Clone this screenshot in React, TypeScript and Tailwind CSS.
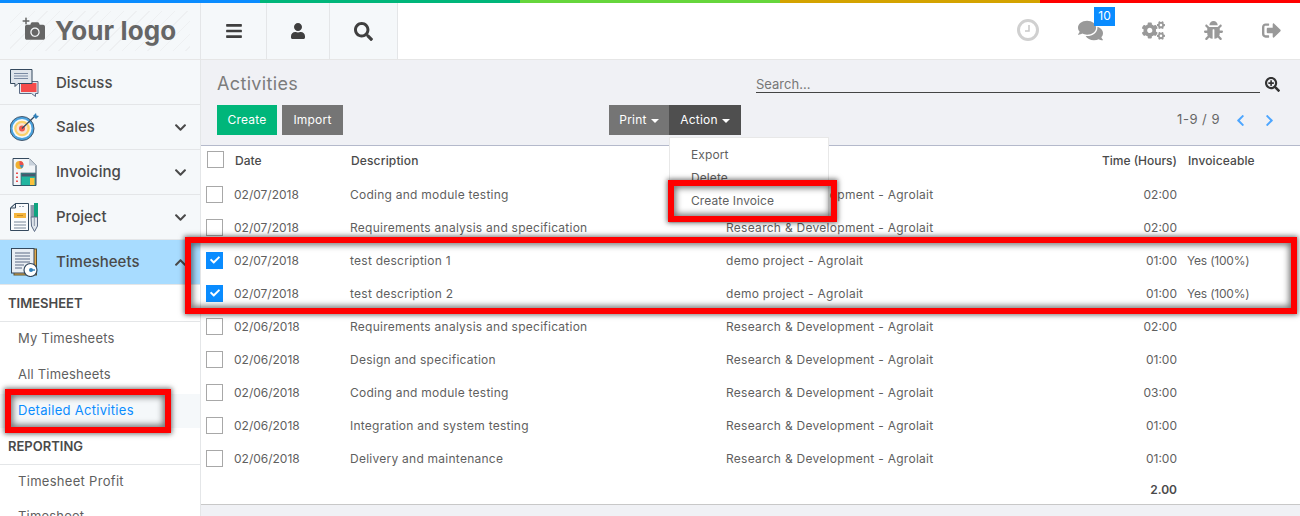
import React from 'react';
import { FaBars, FaUser, FaSearch, FaComments, FaCogs, FaBug, FaSignOutAlt, FaSearchPlus, FaChevronDown, FaChevronUp, FaChevronLeft, FaChevronRight, FaCheck, FaCamera, FaPlus } from 'react-icons/fa';

const DiscussIcon = () => (
  <svg width="30" height="30" viewBox="0 0 30 30">
    <path d="M9.500 13.500h18.500v12h-2.500v3l-4-3H9.500z" fill="#dfe5ec" stroke="#5c6b85" strokeWidth="1" />
    <rect x="11" y="15" width="15.500" height="9" fill="#f54a4a" />
    <path d="M.5 1.500h21.500v14H8l-3 3v-3H.5z" fill="#dfe5ec" stroke="#34495e" strokeWidth="1" />
    <path d="M4 5.500h14M4 8h14M4 10.500h14" stroke="#7a8aa3" strokeWidth="1.200" />
  </svg>
);

const SalesIcon = () => (
  <svg width="30" height="30" viewBox="0 0 30 30">
    <circle cx="12" cy="16.500" r="12" fill="#4aa3df" stroke="#46596e" strokeWidth="1" />
    <circle cx="12" cy="16.500" r="9.500" fill="#f5f8fa" />
    <circle cx="12" cy="16.500" r="7.800" fill="#fbd16b" />
    <circle cx="12" cy="16.500" r="5.500" fill="#fbe3cf" />
    <circle cx="12" cy="16.500" r="3" fill="#ef5a50" />
    <path d="M12 16.500L24 5" stroke="#34495e" strokeWidth="1.200" />
    <path d="M23 4l3-3 .5 2.500L29 4l-3 3z" fill="#2f7fb8" />
  </svg>
);

const InvoicingIcon = () => (
  <svg width="30" height="30" viewBox="0 0 30 30">
    <path d="M3 1.500h16l7 7v20H3z" fill="#f2f5f8" stroke="#34495e" strokeWidth="1" />
    <path d="M19 1.500v7h7z" fill="#c9d2dc" />
    <circle cx="9.500" cy="8" r="4" fill="#f0b030" />
    <path d="M9.500 8V4a4 4 0 0 1 4 4z" fill="#e94f4f" />
    <path d="M9.500 8h4a4 4 0 0 1-2 3.500z" fill="#3f8fc4" />
    <rect x="11" y="16" width="14.500" height="12.500" fill="#22b5a0" stroke="#34495e" strokeWidth=".6" />
    <rect x="11.500" y="16.500" width="13.500" height="3" fill="#46596e" />
    <rect x="20" y="21" width="4.500" height="7" fill="#fbc13c" />
    <path d="M7 15.500v1.500M7 19.500v1.500M7 23.500v1.500" stroke="#e94f4f" strokeWidth="2" />
  </svg>
);

const ProjectIcon = () => (
  <svg width="30" height="30" viewBox="0 0 30 30">
    <path d="M.5 6l5-4.500h13v27H.5z" fill="#fbfcfd" stroke="#34495e" strokeWidth="1" />
    <path d="M.5 6h5V1.500z" fill="#dfe5ec" stroke="#34495e" strokeWidth="1" />
    <path d="M9 4.500h2M12 4.500h2" stroke="#9aa6b5" strokeWidth="1" />
    <rect x="4" y="11" width="12" height="5" fill="#f5b53d" />
    <path d="M7 13.500h6" stroke="#c78a1f" strokeWidth="1" />
    <path d="M4 20h12M4 23h12M4 26h12" stroke="#a4adb9" strokeWidth="1.500" />
    <rect x="24" y="1" width="4" height="14" fill="#0fa37f" />
    <rect x="20.500" y="3" width="3.500" height="12" fill="#8a96a8" />
    <path d="M21 15h6.500v9l-3 5.500-3-5.500z" fill="#dfe5ec" stroke="#5c6b85" strokeWidth="1" />
    <path d="M24.300 15v9" stroke="#8a96a8" strokeWidth="1" />
  </svg>
);

const TimesheetsIcon = () => (
  <svg width="30" height="30" viewBox="0 0 30 30">
    <rect x="4" y="2" width="22.500" height="26" fill="#e3a94a" stroke="#5a5230" strokeWidth="1" />
    <rect x="1.500" y="1.500" width="22.500" height="24.500" fill="#e9eef3" stroke="#34495e" strokeWidth="1" />
    <path d="M5 6h15M5 9h15M5 12h15M5 15h15M5 18h9M5 21h7" stroke="#5c6b85" strokeWidth="1.200" />
    <circle cx="20.500" cy="23" r="6.500" fill="#fff" stroke="#34495e" strokeWidth="1.200" />
    <circle cx="21" cy="23" r="2" fill="#2f7fb8" />
    <path d="M21 23h4" stroke="#2f7fb8" strokeWidth="1.400" />
  </svg>
);

const menu = [
  { label: 'Discuss', icon: <DiscussIcon />, first: true },
  { label: 'Sales', icon: <SalesIcon />, arrow: 'down' },
  { label: 'Invoicing', icon: <InvoicingIcon />, arrow: 'down' },
  { label: 'Project', icon: <ProjectIcon />, arrow: 'down' },
  { label: 'Timesheets', icon: <TimesheetsIcon />, arrow: 'up', active: true },
];

const rows = [
  ['02/07/2018', 'Coding and module testing', 'Research & Development - Agrolait', '02:00', ''],
  ['02/07/2018', 'Requirements analysis and specification', 'Research & Development - Agrolait', '02:00', ''],
  ['02/07/2018', 'test description 1', 'demo project - Agrolait', '01:00', 'Yes (100%)', 'checked'],
  ['02/07/2018', 'test description 2', 'demo project - Agrolait', '01:00', 'Yes (100%)', 'checked'],
  ['02/06/2018', 'Requirements analysis and specification', 'Research & Development - Agrolait', '02:00', ''],
  ['02/06/2018', 'Design and specification', 'Research & Development - Agrolait', '01:00', ''],
  ['02/06/2018', 'Coding and module testing', 'Research & Development - Agrolait', '03:00', ''],
  ['02/06/2018', 'Integration and system testing', 'Research & Development - Agrolait', '01:00', ''],
  ['02/06/2018', 'Delivery and maintenance', 'Research & Development - Agrolait', '01:00', ''],
];

const Checkbox = ({ checked }: { checked?: boolean }) =>
  checked ? (
    <span className="flex h-[17px] w-[17px] items-center justify-center bg-[#0a8cff] text-[10px] text-white"><FaCheck /></span>
  ) : (
    <span className="block h-[17px] w-[17px] border border-[#a8a8a8] bg-white" />
  );

const RedBox = ({ className }: { className: string }) => (
  <div className={`pointer-events-none absolute border-[6px] border-[#ff0000] shadow-[0_0_5px_1px_rgba(0,0,0,0.55),inset_0_0_6px_2px_rgba(0,0,0,0.55)] ${className}`} />
);

const gridCols = 'grid grid-cols-[33px_116px_376px_351px_100px_123px] items-center';

export default function App() {
  return (
    <div className="relative flex h-[516px] w-[1300px] flex-col overflow-hidden bg-white font-['Inter','Liberation_Sans',sans-serif] text-[13px] text-[#5f5f5f]">
      <div className="flex h-[3px] shrink-0">
        <div className="w-[260px] bg-[#0a8cff]" />
        <div className="w-[260px] bg-[#00b67a]" />
        <div className="w-[260px] bg-[#66d63c]" />
        <div className="w-[260px] bg-[#d4a300]" />
        <div className="w-[260px] bg-[#ff0000]" />
      </div>

      <header className="flex h-[57px] shrink-0 items-center border-b border-[#e6e6e6]">
        <div className="flex h-full items-stretch bg-[#f5f8fa] text-[#3f3f3f]">
          <div className="flex w-[201px] items-center border-r border-[#e4e6e8] px-[10px]">
            <div className="flex h-[40px] w-[180px] items-center bg-[repeating-linear-gradient(135deg,#f5f8fa_0,#f5f8fa_8px,#eef0f2_8px,#eef0f2_9px)] pl-[15px] text-[#666]">
              <span className="relative mr-[10px] text-[20px]">
                <FaCamera />
                <FaPlus className="absolute -left-[3px] -top-[4px] text-[8px]" />
              </span>
              <span className="text-[26px] leading-none font-bold tracking-[0.1px]">Your logo</span>
            </div>
          </div>
          <div className="flex w-[66px] items-center justify-center border-r border-[#e4e6e8] text-[18px]"><FaBars /></div>
          <div className="flex w-[63px] items-center justify-center border-r border-[#e4e6e8] text-[16px]"><FaUser /></div>
          <div className="flex w-[68px] items-center justify-center border-r border-[#e4e6e8] text-[19px]"><FaSearch /></div>
        </div>
        <div className="mb-[2px] ml-auto flex items-center text-[#999]">
          <span className="mr-[39px] flex h-[22px] w-[22px] items-center justify-center rounded-full border-[3px] border-[#d0d0d0]">
            <svg width="12" height="12" viewBox="0 0 12 12"><path d="M7 1v6H3" stroke="#c8c8c8" strokeWidth="1.500" fill="none" /></svg>
          </span>
          <span className="relative mr-[39px] text-[25px]">
            <FaComments />
            <span className="absolute -top-[11px] left-[16px] flex h-[19px] w-[21px] items-center justify-center bg-[#0a8cff] text-[12px] text-white">10</span>
          </span>
          <span className="mr-[39px] text-[23px]"><FaCogs /></span>
          <span className="mr-[39px] text-[19px]"><FaBug /></span>
          <span className="mr-[19px] text-[19px]"><FaSignOutAlt /></span>
        </div>
      </header>

      <div className="flex min-h-0 flex-1">
        <aside className="w-[201px] shrink-0 overflow-hidden border-r border-[#e4e6e8] bg-white">
          {menu.map((m) => (
            <div key={m.label} className={`flex h-[45px] items-center border-b border-[#e4e6e8] pr-[13px] pl-[10px] text-[15px] font-medium text-[#4a4a4a] ${m.active ? 'bg-[#a8dcff]' : 'bg-[#f5f8fa]'} ${m.first ? 'pt-[2px]' : ''}`}>
              <span className="w-[46px] shrink-0">{m.icon}</span>
              <span>{m.label}</span>
              {m.arrow === 'down' && <FaChevronDown className="ml-auto text-[13px]" />}
              {m.arrow === 'up' && <FaChevronUp className="ml-auto text-[13px]" />}
            </div>
          ))}
          <div className="flex h-[37px] items-center border-b border-[#e4e6e8] pt-[1px] pl-[8px] text-[13px] font-semibold text-[#4a4a4a]">TIMESHEET</div>
          <div className="flex h-[36px] items-center pb-[2px] pl-[18px] tracking-[0.2px]">My Timesheets</div>
          <div className="flex h-[36px] items-center pb-[2px] pl-[18px] tracking-[0.2px]">All Timesheets</div>
          <div className="flex h-[34px] items-center bg-[#f5f8fa] pl-[18px] tracking-[0.3px] text-[#0a8cff]">Detailed Activities</div>
          <div className="flex h-[37px] items-center border-b border-[#e4e6e8] pt-[2px] pl-[8px] text-[13px] font-semibold text-[#4a4a4a]">REPORTING</div>
          <div className="flex h-[34px] items-center pl-[18px] tracking-[0.3px]">Timesheet Profit</div>
          <div className="flex h-[36px] items-center pl-[18px] tracking-[0.2px]">Timesheet</div>
        </aside>

        <main className="flex min-w-0 flex-1 flex-col bg-[#f0f1f5]">
          <div className="h-[86px] shrink-0 border-b border-[#b4b9cb] px-[16px]">
            <div className="flex h-[45px] items-center">
              <h1 className="w-[539px] pt-[1px] text-[18px] font-normal tracking-[0.35px] text-[#7c7c7c]">Activities</h1>
              <div className="flex h-[20px] w-[504px] items-end border-b border-[#444] pb-[1px] text-[13px] leading-none text-[#777]">Search...</div>
              <FaSearchPlus className="mt-[3px] ml-[5px] text-[15px] text-[#333]" />
            </div>
            <div className="flex h-[30px] items-center text-[12px] tracking-[0.2px] text-white">
              <button className="h-full w-[60px] bg-[#00b67a]">Create</button>
              <button className="ml-[5px] h-full w-[61px] bg-[#757575]">Import</button>
              <button className="ml-[266px] flex h-full w-[60px] items-center justify-center gap-[4px] bg-[#757575]">
                Print <span className="mt-[2px] border-x-[4px] border-t-[4px] border-x-transparent border-t-white" />
              </button>
              <button className="flex h-full w-[72px] items-center justify-center gap-[4px] bg-[#4f4f4f]">
                Action <span className="mt-[2px] border-x-[4px] border-t-[4px] border-x-transparent border-t-white" />
              </button>
              <span className="ml-auto text-[13px] tracking-[0.5px] text-[#666]">1-9 / 9</span>
              <FaChevronLeft className="ml-[14px] text-[13px] text-[#4da6ff]" />
              <FaChevronRight className="mr-[8px] ml-[16px] text-[13px] text-[#4da6ff]" />
            </div>
          </div>

          <div className="h-[359px] shrink-0 border-b border-[#c8c8c8] bg-white">
            <div className={`${gridCols} h-[32px] pb-[2px] text-[12px] font-medium text-[#4a4a4a]`}>
              <span className="pb-[3px] pl-[6px]"><Checkbox /></span>
              <span className="pl-px">Date</span>
              <span className="pl-px tracking-[0.15px]">Description</span>
              <span />
              <span className="text-right">Time (Hours)</span>
              <span className="pl-[11px] tracking-[0.1px]">Invoiceable</span>
            </div>
            {rows.map((r, i) => (
              <div key={i} className={`${gridCols} h-[33px] pt-px text-[12px]`}>
                <span className="pb-[2px] pl-[5px]"><Checkbox checked={r[5] === 'checked'} /></span>
                <span>{r[0]}</span>
                <span className="tracking-[0.25px]">{r[1]}</span>
                <span className="tracking-[0.28px]">{r[2]}</span>
                <span className="text-right">{r[3]}</span>
                <span className="pl-[10px] tracking-[-0.2px]">{r[4]}</span>
              </div>
            ))}
            <div className={`${gridCols} h-[29px] pt-px text-[12px] font-semibold text-[#4a4a4a]`}>
              <span /><span /><span /><span />
              <span className="text-right">2.00</span>
            </div>
          </div>
        </main>
      </div>

      {/* dropdown */}
      <div className="absolute top-[137px] left-[669px] h-[86px] w-[160px] border border-[#e8e8e8] bg-white pt-[5px] pl-[21px] text-[12px] tracking-[0.1px]">
        <div className="flex h-[23px] items-center">Export</div>
        <div className="flex h-[23px] items-center">Delete</div>
        <div className="flex h-[23px] items-center">Create Invoice</div>
      </div>

      <RedBox className="top-[180px] left-[668px] h-[42px] w-[169px]" />
      <RedBox className="top-[237px] left-[185px] h-[77px] w-[1112px]" />
      <RedBox className="top-[389px] left-[5px] h-[44px] w-[166px]" />
    </div>
  );
}
